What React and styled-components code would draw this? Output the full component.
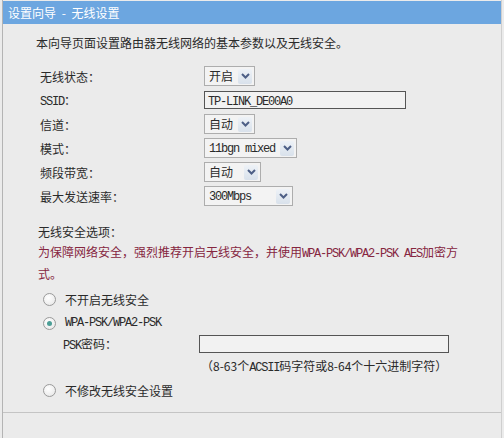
import React from "react";
import styled, { createGlobalStyle } from "styled-components";

const Global = createGlobalStyle`
  body {
    margin: 0;
    background: #ebebeb;
    font-family: "Noto Sans CJK SC", "Noto Sans", sans-serif;
    font-size: 12px;
    color: #2a2a2a;
  }
`;

const Frame = styled.div`
  height: 438px;
  margin: 0 2px;
  border-left: 1px solid #b4b4b4;
  border-right: 1px solid #cfcfcf;
  box-sizing: border-box;
  overflow: hidden;
`;

const Header = styled.div`
  height: 23px;
  margin-top: 1px;
  padding-left: 5px;
  background: #6ca6e0;
  color: #fff;
  line-height: 23px;
  word-spacing: 3px;
`;

const Intro = styled.div`
  margin-top: 9px;
  padding-left: 33px;
  line-height: 20px;
`;

const Form = styled.div`
  display: grid;
  grid-template-columns: 164px auto;
  grid-auto-rows: 24px;
  align-items: center;
  margin-top: 11px;
  padding-left: 37px;
`;

const Mono = styled.span`
  font-family: "Liberation Mono", monospace;
  font-size: 12px;
  letter-spacing: -1.2px;
`;

const SelectBox = styled.div`
  display: flex;
  align-items: center;
  width: ${(p) => p.$w}px;
  height: 20px;
  box-sizing: border-box;
  border: 1px solid #adadad;
  background: #f3f3f3;
`;

const SelectText = styled.span`
  flex: 1;
  padding-left: 4px;
  line-height: 18px;
  white-space: nowrap;
`;

const ArrowBox = styled.span`
  display: flex;
  align-items: center;
  justify-content: center;
  width: 14px;
  height: 15px;
  margin-right: 2px;
  background: linear-gradient(#eef2f7, #d8e1eb);
  border-radius: 2px;
`;

const TextInput = styled.div`
  width: ${(p) => p.$w}px;
  height: ${(p) => p.$h}px;
  box-sizing: border-box;
  border: 1px solid #555;
  background: #f2f2f2;
  padding-left: 3px;
  line-height: ${(p) => p.$h - 2}px;
`;

const SectionTitle = styled.div`
  margin-top: 14px;
  padding-left: 35px;
  line-height: 20px;
`;

const Warning = styled.div`
  padding-left: 35px;
  line-height: 20px;
  color: #86263f;
`;

const Options = styled.div`
  display: flex;
  flex-direction: column;
  margin-top: 3px;
`;

const RadioRow = styled.div`
  display: flex;
  align-items: center;
  gap: 9px;
  height: 24px;
  padding-left: 40px;
`;

const Radio = styled.span`
  display: flex;
  align-items: center;
  justify-content: center;
  width: 13px;
  height: 13px;
  box-sizing: border-box;
  border: 1px solid #9a9a9a;
  border-radius: 50%;
  background: radial-gradient(circle at 40% 35%, #fff, #e4e4e4);

  &::after {
    content: "";
    display: ${(p) => (p.$on ? "block" : "none")};
    width: 5px;
    height: 5px;
    border-radius: 50%;
    background: #4c9e96;
  }
`;

const PskGrid = styled.div`
  display: grid;
  grid-template-columns: 136px auto;
  align-items: center;
  padding-left: 60px;
`;

const Hint = styled.div`
  margin-top: 3px;
  line-height: 20px;
  margin-left: 2px;
`;

const Rule = styled.div`
  margin-top: 10px;
  border-top: 1px solid #c4c4c4;
`;

function Chevron() {
  return (
    <svg width="9" height="6" viewBox="0 0 9 6">
      <polyline points="1,1 4.5,4.5 8,1" fill="none" stroke="#4d5f86" strokeWidth="2" />
    </svg>
  );
}

function Select({ w, children }) {
  return (
    <SelectBox $w={w}>
      <SelectText>{children}</SelectText>
      <ArrowBox>
        <Chevron />
      </ArrowBox>
    </SelectBox>
  );
}

export default function App() {
  return (
    <>
      <Global />
      <Frame>
        <Header>设置向导 - 无线设置</Header>
        <Intro>本向导页面设置路由器无线网络的基本参数以及无线安全。</Intro>

        <Form>
          <span>无线状态：</span>
          <Select w={51}>开启</Select>
          <span>
            <Mono>SSID</Mono>：
          </span>
          <TextInput $w={202} $h={18}>
            <Mono>TP-LINK_DE00A0</Mono>
          </TextInput>
          <span>信道：</span>
          <Select w={51}>自动</Select>
          <span>模式：</span>
          <Select w={93}>
            <Mono>11bgn mixed</Mono>
          </Select>
          <span>频段带宽：</span>
          <Select w={57}>自动</Select>
          <span>最大发送速率：</span>
          <Select w={89}>
            <Mono>300Mbps</Mono>
          </Select>
        </Form>

        <SectionTitle>无线安全选项：</SectionTitle>
        <Warning>
          为保障网络安全，强烈推荐开启无线安全，并使用<Mono>WPA-PSK/WPA2-PSK AES</Mono>加密方
          <br />
          式。
        </Warning>

        <Options>
          <RadioRow>
            <Radio />
            <span>不开启无线安全</span>
          </RadioRow>
          <RadioRow>
            <Radio $on />
            <Mono>WPA-PSK/WPA2-PSK</Mono>
          </RadioRow>
          <PskGrid>
            <span>
              <Mono>PSK</Mono>密码：
            </span>
            <TextInput $w={250} $h={18} />
            <span />
            <Hint>
              （8-63个<Mono>ACSII</Mono>码字符或8-64个十六进制字符）
            </Hint>
          </PskGrid>
          <RadioRow>
            <Radio />
            <span>不修改无线安全设置</span>
          </RadioRow>
        </Options>

        <Rule />
      </Frame>
    </>
  );
}
